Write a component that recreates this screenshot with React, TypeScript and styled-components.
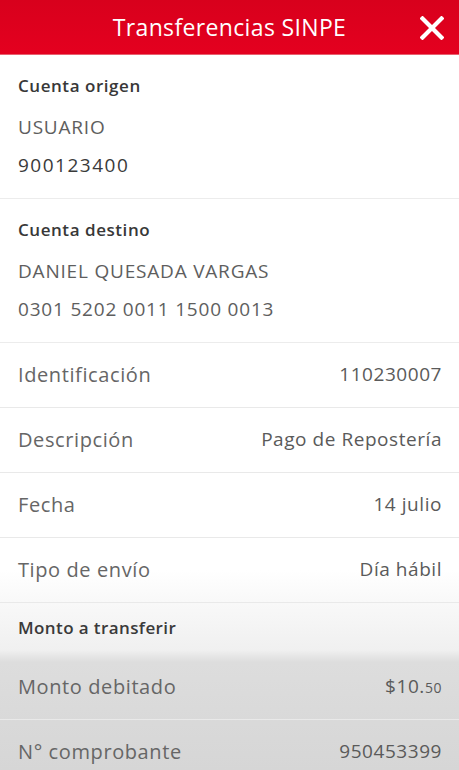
import React from "react";
import styled, { createGlobalStyle } from "styled-components";

const Global = createGlobalStyle`
  html, body { margin: 0; padding: 0; background: #fff; }
  body { font-family: "Open Sans", "Noto Sans", Arial, sans-serif; -webkit-font-smoothing: antialiased; }
  * { box-sizing: border-box; }
`;

const Screen = styled.div`
  width: 459px;
  height: 770px;
  overflow: hidden;
  display: flex;
  flex-direction: column;
  background: linear-gradient(
    to bottom,
    #ffffff 0px,
    #ffffff 570px,
    #f8f8f8 605px,
    #f0f0f0 650px,
    #dddddd 662px,
    #d6d6d6 770px
  );
`;

const Header = styled.header`
  height: 55px;
  flex: none;
  background: linear-gradient(to bottom, #d8001c, #e4001f);
  display: flex;
  align-items: center;
  justify-content: center;
  position: relative;
  border-bottom: 1px solid #e8606f;
`;

const Title = styled.h1`
  margin: 0;
  color: #fff;
  font-size: 23px;
  font-weight: 400;
  letter-spacing: 0.35px;
`;

const CloseButton = styled.button`
  position: absolute;
  right: 14px;
  top: 15px;
  width: 26px;
  height: 26px;
  padding: 0;
  border: none;
  background: none;
  display: flex;
  align-items: center;
  justify-content: center;
`;

const Section = styled.section`
  padding: 20px 18px 14px;
  border-bottom: 1px solid #ececec;
  display: flex;
  flex-direction: column;
`;

const SectionLabel = styled.div`
  font-size: 17px;
  font-weight: 600;
  color: #383838;
  line-height: 22px;
  letter-spacing: 0.55px;
  margin-bottom: 11px;
`;

const SectionValue = styled.div<{ $dark?: boolean }>`
  font-size: 19px;
  line-height: 38px;
  letter-spacing: ${(p) => (p.$dark ? "1.5px" : "0.8px")};
  color: ${(p) => (p.$dark ? "#3a3a3a" : "#5e5e5e")};
  white-space: nowrap;
`;

const Row = styled.div<{ $height?: number }>`
  height: ${(p) => p.$height ?? 65}px;
  flex: none;
  padding: 0 17px 2px 18px;
  display: flex;
  align-items: center;
  justify-content: space-between;
  border-bottom: 1px solid #e9e9e9;
`;

const RowLabel = styled.span`
  font-size: 20px;
  letter-spacing: 0.6px;
  color: #666;
`;

const RowValue = styled.span`
  font-size: 19px;
  letter-spacing: 0.55px;
  color: #5a5a5a;
`;

const Small = styled.span`
  font-size: 14px;
`;

const GroupLabel = styled.span`
  font-size: 17px;
  font-weight: 600;
  letter-spacing: 0.4px;
  color: #3a3a3a;
`;

const CloseIcon = () => (
  <svg width="24" height="24" viewBox="0 0 24 24">
    <path d="M2.5 2.5 L21.5 21.5 M21.5 2.5 L2.5 21.5" stroke="#fff" strokeWidth="4.2" strokeLinecap="square" />
  </svg>
);

const rows: [string, React.ReactNode][] = [
  ["Identificación", "110230007"],
  ["Descripción", "Pago de Repostería"],
  ["Fecha", "14 julio"],
  ["Tipo de envío", "Día hábil"],
];

export default function App() {
  return (
    <>
      <Global />
      <Screen>
        <Header>
          <Title>Transferencias SINPE</Title>
          <CloseButton aria-label="Cerrar">
            <CloseIcon />
          </CloseButton>
        </Header>
        <Section>
          <SectionLabel>Cuenta origen</SectionLabel>
          <SectionValue>USUARIO</SectionValue>
          <SectionValue $dark>900123400</SectionValue>
        </Section>
        <Section>
          <SectionLabel>Cuenta destino</SectionLabel>
          <SectionValue>DANIEL QUESADA VARGAS</SectionValue>
          <SectionValue>0301 5202 0011 1500 0013</SectionValue>
        </Section>
        {rows.map(([l, v]) => (
          <Row key={l}>
            <RowLabel>{l}</RowLabel>
            <RowValue>{v}</RowValue>
          </Row>
        ))}
        <Row $height={52}>
          <GroupLabel>Monto a transferir</GroupLabel>
        </Row>
        <Row>
          <RowLabel>Monto debitado</RowLabel>
          <RowValue>
            $10.<Small>50</Small>
          </RowValue>
        </Row>
        <Row>
          <RowLabel>N° comprobante</RowLabel>
          <RowValue>950453399</RowValue>
        </Row>
      </Screen>
    </>
  );
}
